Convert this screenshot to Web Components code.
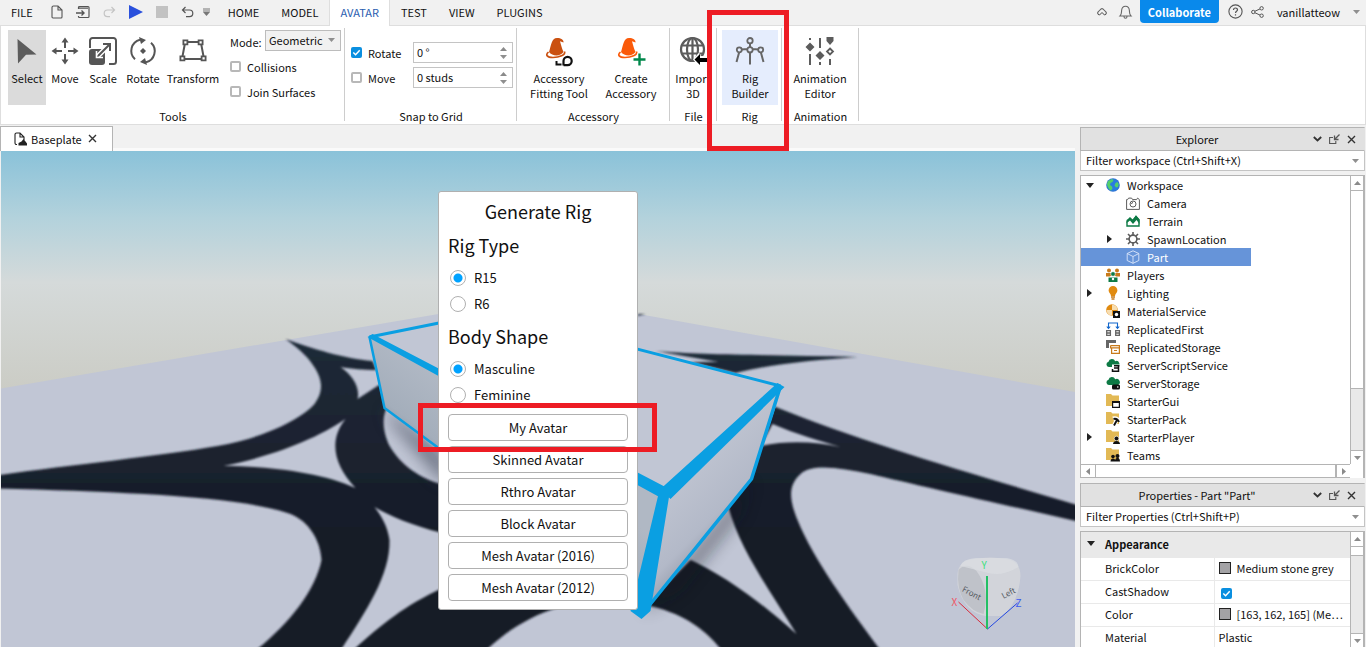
<!DOCTYPE html>
<html lang="en">
<head>
<meta charset="utf-8">
<meta name="viewport" content="width=device-width, initial-scale=1">
<title>Baseplate - Studio</title>
<style>
html, body { margin: 0; height: 100%; }
body { font: 11px/16px "Noto Sans CJK SC", "Noto Sans", sans-serif; color: #111; background: #f1f1f1; overflow: hidden; }
</style>
</head>
<body>
<studio-app></studio-app>
<script>
const ICONS = {
  file: [12,14,'<path d="M1 2.500a1.500 1.500 0 0 1 1.500-1.500H7l4 4v7a1 1 0 0 1-1 1H2a1 1 0 0 1-1-1zM7 1v4h4" fill="none" stroke="#555" stroke-width="1.100"/>'],
  open: [14,14,'<path d="M2.500 4V2.500a1 1 0 0 1 1-1h8.500a1 1 0 0 1 1 1v9a1 1 0 0 1-1 1H3.500a1 1 0 0 1-1-1V11M3 3.200h9" fill="none" stroke="#555" stroke-width="1.200"/><path d="M0 8h8M5.500 5.500 8 8l-2.500 2.500" fill="none" stroke="#555" stroke-width="1.400"/>'],
  redo: [13,12,'<path d="M11.500 4H4.500a3.300 3.300 0 0 0 0 6.600H7M8.500 1l3 3-3 3" fill="none" stroke="#c4c4c4" stroke-width="1.200"/>'],
  undo: [13,12,'<path d="M1.500 4h7a3.300 3.300 0 0 1 0 6.600H5M4.500 1l-3 3 3 3" fill="none" stroke="#555" stroke-width="1.200"/>'],
  play: [14,14,'<path d="M0 0 14 7 0 14z" fill="#2a50dc"/>'],
  stop: [12,12,'<path d="M0 0h12v12H0z" fill="#c2c2c2"/>'],
  more: [7,8,'<path d="M0 1h7M0 3h7" stroke="#777"/><path d="M0 4h7L3.500 8z" fill="#777"/>'],
  caret: [7,4,'<path d="M0 0h7L3.500 4z" fill="#8f8f8f"/>'],
  cloud: [10,8,'<path d="M5 .7a2.300 2.300 0 0 0-2.300 2 2.300 2.300 0 0 0-2 2.300A2 2 0 0 0 2.500 7L5 4.500 7.500 7a2 2 0 0 0 1.800-2 2.300 2.300 0 0 0-2-2.300A2.300 2.300 0 0 0 5 .7z" fill="none" stroke="#444"/>'],
  bell: [13,14,'<path d="M1 11h11c-1.600-1.500-1.500-3-1.600-5.500C10.200 3 8.800 1.300 6.500 1.300S2.800 3 2.600 5.500C2.500 8 2.600 9.500 1 11zM5 11.500c0 2.400 3 2.400 3 0" fill="none" stroke="#666" stroke-width="1.100"/>'],
  help: [15,15,'<circle cx="7.500" cy="7.500" r="6.600" fill="none" stroke="#555" stroke-width="1.100"/><path d="M5.500 6c0-2.700 4-2.600 4-.2 0 1.500-2 1.500-2 3.200M7.500 10.300v1.200" fill="none" stroke="#555" stroke-width="1.200"/>'],
  share: [13,12,'<path d="M2.300 6 10.300 2.300M2.300 6l8 3.700" stroke="#555"/><g fill="#f1f1f1" stroke="#555"><circle cx="2.300" cy="6" r="1.700"/><circle cx="10.600" cy="2.300" r="1.700"/><circle cx="10.600" cy="9.700" r="1.700"/></g>'],
  select: [28,28,'<path d="M4.500 2 23.500 17.500 13 17.800 5 26.500z" fill="#5c5c5c"/>'],
  move: [28,28,'<path d="M14 3v8M14 17v8M3 14h8M17 14h8" stroke="#555" stroke-width="2"/><path d="M10.500 5.500 14 .5l3.500 5zM10.500 22.500l3.500 5 3.500-5zM5.500 10.500l-5 3.500 5 3.500zM22.500 10.500l5 3.500-5 3.500z" fill="#555"/>'],
  scale: [28,28,'<path d="M1 11V3.500A2.500 2.500 0 0 1 3.500 1h21A2.500 2.500 0 0 1 27 3.500v21a2.500 2.500 0 0 1-2.500 2.500H20" fill="none" stroke="#555" stroke-width="2"/><path d="M0 15a3 3 0 0 1 3-3h10a3 3 0 0 1 3 3v10a3 3 0 0 1-3 3H3a3 3 0 0 1-3-3z" fill="#555"/><path d="M9 19 19 9" stroke="#fff" stroke-width="5"/><path d="M9 19 20 8M14 7H21V14" fill="none" stroke="#555" stroke-width="2"/><path d="M7.500 14v6.500H14" fill="none" stroke="#fff" stroke-width="1.600"/>'],
  rotate: [28,28,'<path d="M17 25.300A11.500 11.500 0 0 0 22 5.700M11 2.700A11.500 11.500 0 0 0 6 22.300" fill="none" stroke="#555" stroke-width="2"/><path d="M10 0l7 3-5 4zM18 28l-7-3 5-4z" fill="#555"/><path d="M14 11l3 3-3 3-3-3z" fill="#555"/>'],
  transform: [28,28,'<path d="M6.500 5h15M3.500 22h21M6 6 3 22M22 6l3 16" stroke="#555" stroke-width="2"/><g fill="#fff" stroke="#555" stroke-width="1.800"><path d="M4.400 3.400h4v4h-4zM19.600 3.400h4v4h-4zM1.400 19.400h4v4h-4zM22.600 19.400h4v4h-4z"/></g>'],
  fitting: [32,30,'<path d="M6 15C8 9 8.500 1 14 1c4 0 7 2 6.500 4.500L17 4.300C18 8 19 12 20.500 15 17 20 9 19 6 15z" fill="#ca5010"/><path d="M5.500 15C2 18 4 20.500 10 20.500S23 18 21.500 14.500" fill="none" stroke="#ca5010" stroke-width="1.600"/><path d="M13.500 24v3.500h5" fill="none" stroke="#111" stroke-width="2"/><path d="M20.500 28.500v-4.500a4.100 4.100 0 1 1 4.100 4.100h-4" fill="none" stroke="#111" stroke-width="2.200"/>'],
  create: [32,30,'<path d="M6 15C8 9 8.500 1 14 1c4 0 7 2 6.500 4.500L17 4.300C18 8 19 12 20.500 15 17 20 9 19 6 15z" fill="#fa5a0a"/><path d="M5.500 15C2 18 4 20.500 10 20.500S23 18 21.500 14.500" fill="none" stroke="#fa5a0a" stroke-width="1.600"/><path d="M24.500 16.500v12M18.500 22.500h12" stroke="#fff" stroke-width="5"/><path d="M24.500 16.500v12M18.500 22.500h12" stroke="#00884b" stroke-width="2.400"/>'],
  globe: [28,28,'<g fill="none" stroke="#5c5c5c" stroke-width="2.200"><circle cx="13.500" cy="12.500" r="11.500"/><ellipse cx="13.500" cy="12.500" rx="5.500" ry="11.500"/><path d="M13.500 1v23M3 8.500h21M3 16.500h21"/></g><path d="M14 22.500 20.500 15v4H28v7h-7.500v4z" fill="#fff"/><path d="M15.500 22.500 21 17v4h7v4h-7v3z" fill="#000"/>'],
  rig: [30,28,'<path d="M15 5v22.500M4 13C9 11.500 10 12.500 15 12.500S21 11.500 26 13M4.500 14 1.500 25M25.500 14l3 11" fill="none" stroke="#666" stroke-width="2"/><g fill="#e5edfd" stroke="#666" stroke-width="1.800"><circle cx="15" cy="3.700" r="2.700"/><circle cx="15" cy="12.800" r="2.700"/><circle cx="4.300" cy="12.800" r="2.500"/><circle cx="25.700" cy="12.800" r="2.500"/></g>'],
  anim: [28,28,'<path d="M4 1v2M4 17v11M14 1v10M14 25v3M24 22v6" stroke="#5c5c5c" stroke-width="2"/><path d="M4 5.500 8.500 10 4 14.500-.5 10zM14 14l4.500 4.500L14 23l-4.500-4.500zM20.500 0h7v4L24 8l-3.500-4z" fill="#5c5c5c"/><path d="M24 11.500l3 3-3 3-3-3z" fill="#fff" stroke="#5c5c5c" stroke-width="1.800"/>'],
  place: [13,14,'<path d="M3 12.500H2.500A1.500 1.500 0 0 1 1 11V2.500A1.500 1.500 0 0 1 2.500 1H6l4 4v3M6 1v4h4" fill="none" stroke="#222" stroke-width="1.100"/><path d="M4.500 13.500V11l3-1.500L9.500 7l2 2.500 1.500 2v2z" fill="#222"/>'],
  close: [9,9,'<path d="M1 1l7 7M8 1 1 8" stroke="#333" stroke-width="1.400"/>'],
  down: [9,6,'<path d="M.8 1 4.500 4.500 8.200 1" fill="none" stroke="#333" stroke-width="1.800"/>'],
  dock: [11,10,'<path d="M4 3.500H.6v6h6.200V7" fill="none" stroke="#555" stroke-width="1.100"/><path d="M10.500.500 6 5M5.500 1.500V5.500h4" fill="none" stroke="#555" stroke-width="1.300"/>'],
  world: [14,14,'<circle cx="7" cy="7" r="6.800" fill="#2f73d0"/><circle cx="7" cy="7" r="6" fill="#2a7be0"/><path d="M2 3 6 1l1.500 1-1 2-2 1-.500 2 2 1.500.500 2-1.500 2C3 12 1 8 1 6zM9.500 5l2-1 1.200 2-.7 3-2 .5-1.500-2z" fill="#53d06b"/>'],
  camera: [14,13,'<path d="M.6 2.600h1l1-1.500h3l1 1.500h4l1-1.500 1.800 1.500v9.800H.6z" fill="none" stroke="#5c5c5c"/><circle cx="7" cy="7" r="3" fill="none" stroke="#5c5c5c"/><path d="M7 5.500A1.500 1.500 0 0 0 5.500 7" fill="none" stroke="#5c5c5c"/>'],
  terrain: [14,12,'<path d="M1 11V7l3-4 3 3 3-4.500L13 5v6z" fill="none" stroke="#0d7a45" stroke-width="1.400"/><path d="M.5 8V5L4 2.500l2.500 2L10 .5l3.500 3.700V9l-3-4-3.500 4-3-3.500z" fill="#0d7a45"/>'],
  spawn: [14,14,'<circle cx="7" cy="7" r="3.900" fill="none" stroke="#5c5c5c" stroke-width="1.600"/><path d="M7 0v3M7 11v3M0 7h3M11 7h3M2 2l2.200 2.200M9.800 9.800 12 12M12 2 9.800 4.200M4.200 9.800 2 12" stroke="#5c5c5c" stroke-width="1.600"/>'],
  part: [14,14,'<path d="M7 .8 12.800 3.500v7L7 13.300 1.200 10.500v-7zM1.200 3.500 7 6.500l5.800-3M7 6.500v6.800" fill="none" stroke="#dbe7fb" stroke-width=".9"/>'],
  players: [14,14,'<g fill="#c87a1a"><circle cx="3" cy="2.500" r="2"/><circle cx="11" cy="2.500" r="2"/><path d="M0 8.500V5h14v3.500l-3.500 0L7 7 3.500 8.500z"/></g><circle cx="7" cy="6" r="2.300" fill="#0d7a45" stroke="#fff" stroke-width=".6"/><path d="M2.500 14v-4.500h9V14z" fill="#0d7a45"/><circle cx="7" cy="11" r="1.200" fill="#fff"/>'],
  bulb: [14,14,'<path d="M7 0a4.400 4.400 0 0 0-4.400 4.400C2.600 7 5 7.500 5 10h4c0-2.500 2.400-3 2.400-5.600A4.400 4.400 0 0 0 7 0z" fill="#e08a10"/><path d="M5 11h4M5.500 13h3" stroke="#c87a1a" stroke-width="1.300"/>'],
  material: [14,14,'<circle cx="6" cy="6" r="5.800" fill="#e08a10"/><path d="M6 6V.5A5.500 5.500 0 0 1 11.500 6zM6 6v5.500A5.500 5.500 0 0 1 .5 6z" fill="#f7ddb0"/><path d="M7 7h7v7H7z" fill="#111"/><circle cx="10.500" cy="10.500" r="1.700" fill="#fff"/>'],
  repfirst: [14,14,'<path d="M2.500 6V1h9v5M.8 4.500l1.700 2 1.700-2M9.800 4.500l1.700 2 1.700-2" fill="none" stroke="#1266cc" stroke-width="1.100"/><path d="M.7 8.700h3.700v4.700H.7zM9.700 8.700h3.700v4.700H9.700zM1 11h3M10 11h3" fill="none" stroke="#666" stroke-width="1.300"/>'],
  repstore: [14,14,'<path d="M0 0h10v3H3v5H0z" fill="#666"/><path d="M4.600 5.600h8.800v7.800H5.600V8M4.600 5.600v2.200h8.800" fill="#fff" stroke="#c87a1a" stroke-width="1.200"/><path d="M8 10.500h3" stroke="#c87a1a"/>'],
  serverscript: [14,14,'<path d="M2.800 9a2.700 2.700 0 0 1-.3-5.300 3.500 3.500 0 0 1 6.700-.5A3 3 0 0 1 11.500 9z" fill="#0d7a45"/><path d="M6 6.500h8v7H6z" fill="#fff"/><path d="M8 7.700h5.500M8 10h4M12.500 8v5.200H6.500V11" fill="none" stroke="#111" stroke-width="1.500"/>'],
  serverstore: [14,14,'<path d="M2.800 9a2.700 2.700 0 0 1-.3-5.300 3.500 3.500 0 0 1 6.700-.5A3 3 0 0 1 12 9z" fill="#0d7a45"/><rect x="6" y="8.500" width="8" height="5" rx="1.500" fill="#111"/><circle cx="11.800" cy="11" r=".8" fill="#fff"/>'],
  gui: [14,14,'<path d="M0 0h5l1.500 1.500H13V12H0z" fill="#e2b955"/><path d="M6.600 7.600h6.800v5.800H6.600z" fill="#fff" stroke="#111" stroke-width="1.200"/><path d="M6 8h8" stroke="#111" stroke-width="2"/>'],
  pack: [14,14,'<path d="M0 0h5l1.500 1.500H13V12H0z" fill="#e2b955"/><path d="M7 6.500c3-1 5 1 6 3M11 7.500 8 13.500" fill="none" stroke="#fff" stroke-width="4"/><path d="M7.500 7c3-.7 4.500.5 5.500 3M11 8l-3 5.500" fill="none" stroke="#111" stroke-width="1.900"/>'],
  splayer: [14,14,'<path d="M0 0h5l1.500 1.500H13V12H0z" fill="#e2b955"/><circle cx="10.500" cy="8.500" r="2.300" fill="#111" stroke="#fff" stroke-width=".6"/><path d="M7 14c0-4 7-4 7 0z" fill="#111"/>'],
  teams: [14,14,'<path d="M0 0h5l1.500 1.500H13V12H0z" fill="#e2b955"/><g fill="#111"><circle cx="11.500" cy="8" r="2"/><circle cx="7" cy="8.500" r="1.800"/><path d="M4.500 13.500c0-4 5-4 5 0zM9 13.500c0-5 5-5 5 0z"/></g>'],
  arrowRight: [5,8,'<path d="M0 0l5 4-5 4z" fill="#222"/>'],
  arrowDown: [8,5,'<path d="M0 0h8L4 5z" fill="#222"/>'],
  sbUp: [7,4,'<path d="M0 4h7L3.500 0z" fill="#8a8a8a"/>'],
  sbLeft: [4,7,'<path d="M4 0v7L0 3.500z" fill="#8a8a8a"/>'],
  sbRight: [4,7,'<path d="M0 0v7l4-3.500z" fill="#8a8a8a"/>'],
};

const BASE = `*,*::before,*::after{box-sizing:border-box}
button,input,select{font:inherit;color:inherit;margin:0}
button{border:0;background:none;padding:0}`;

/* Registers an element whose shadow root is rendered once from its attributes. */
function define(tag, css, html) {
  const base = document.createElement('template');
  base.innerHTML = `<style>${BASE}${css}</style>`;
  customElements.define(tag, class extends HTMLElement {
    constructor() {
      super();
      this.attachShadow({ mode: 'open' }).append(base.content.cloneNode(true));
    }
    connectedCallback() {
      if (this.ready) return;
      this.ready = true;
      const t = document.createElement('template');
      t.innerHTML = typeof html === 'function' ? html(this) : html;
      this.shadowRoot.append(t.content.cloneNode(true));
    }
  });
}

define('ui-icon', `:host{display:block;flex:none}svg{display:block;overflow:visible}`, el => {
  const [w, h, body] = ICONS[el.getAttribute('name')];
  return `<svg width="${w}" height="${h}" viewBox="0 0 ${w} ${h}" aria-hidden="true">${body}</svg>`;
});

define('ui-check', `:host{display:block}
label{display:flex;align-items:center;gap:6px;height:25px;white-space:nowrap}
input{appearance:none;width:11px;height:11px;border:2px solid #b8b8b8;border-radius:2px;background:#fff;display:block}
input:checked{border:0;background:#0a8fe0 url("data:image/svg+xml,%3Csvg xmlns='http://www.w3.org/2000/svg' viewBox='0 0 12 12'%3E%3Cpath d='M2.500 6l2.500 2.500 4.500-5' fill='none' stroke='white' stroke-width='1.600'/%3E%3C/svg%3E") center/100%}`,
  el => `<label><input type="checkbox" ${el.hasAttribute('checked') ? 'checked' : ''}><slot></slot></label>`);

define('mark-box', `:host{position:absolute;border:5px solid #ed1c24;pointer-events:none;z-index:5}`, '');

define('menu-bar', `:host{display:flex;align-items:stretch;height:26px;background:#f1f1f1;border-bottom:1px solid #dedede}
nav{display:flex;margin-bottom:-1px}
nav button{padding:0 11px 3px}
nav:first-child button{padding-left:13px}
nav .on{background:#fff;color:#2a5db0;border:1px solid #dedede;border-width:0 1px;padding:0 10px 3px}
.quick{display:flex;gap:13px;align-items:center;padding:0 7px 2px}
.quick button:last-child{margin-left:-4px}
.user{margin-left:auto;display:flex;align-items:center;padding-right:6px}
.user>*{margin-bottom:2px}
.collab{background:#0989eb;color:#fff;font-weight:700;height:23px;width:79px;border-radius:0 0 4px 4px;align-self:flex-start;margin:0 9px 0 8px}
.name{margin:0 13px;padding-bottom:1px}`,
`<nav><button>FILE</button></nav>
<div class="quick">${['file','open','redo','play','stop','undo','more'].map(i => `<button aria-label="${i}"><ui-icon name="${i}"></ui-icon></button>`).join('')}</div>
<nav><button>HOME</button><button>MODEL</button><button class="on">AVATAR</button><button>TEST</button><button>VIEW</button><button>PLUGINS</button></nav>
<div class="user"><ui-icon name="cloud"></ui-icon><ui-icon name="bell" style="margin-left:12px"></ui-icon>
<button class="collab">Collaborate</button><ui-icon name="help"></ui-icon><ui-icon name="share" style="margin-left:8px"></ui-icon><button class="name">vanillatteow</button><ui-icon name="caret"></ui-icon></div>`);

define('ribbon-group', `:host{display:flex;flex-direction:column;position:relative;flex:none;padding:4px 0 0;height:98px}
:host::after{content:"";position:absolute;right:0;top:2px;bottom:3px;width:1px;background:#cdcdcd}
.row{display:flex;height:75px}
.label{text-align:center;padding-top:3px}`,
  el => `<div class="row"><slot></slot></div><div class="label">${el.getAttribute('label')}</div>`);

define('tool-button', `:host{display:block;flex:none}
button{display:flex;flex-direction:column;align-items:center;width:100%;height:75px;white-space:pre-line;line-height:15px}
.i{height:28px;margin:7px 0 6px}
:host([active]) button{background:#dbdbdb}
:host([hot]) button{background:#e5edfd}`,
  el => `<button><ui-icon class="i" name="${el.getAttribute('icon')}"></ui-icon><span><slot></slot></span></button>`);

define('spin-box', `:host{display:flex;align-items:center;width:100px;height:21px;border:1px solid #c4c4c4;background:#fff;padding-right:5px}
input{flex:1;min-width:0;border:0;background:none;padding:0 3px 2px;outline:0}
div{display:grid;gap:4px}`,
  el => `<input value="${el.getAttribute('value')}" aria-label="${el.getAttribute('label')}"><div><ui-icon name="sbUp"></ui-icon><ui-icon name="caret"></ui-icon></div>`);

define('ribbon-bar', `:host{display:flex;height:99px;background:#fff;border:1px solid #dedede;border-top:0}
.opts{padding-left:8px;width:119px;margin-top:-1px}
.mode{display:flex;align-items:center;justify-content:space-between;height:25px}
.sel{position:relative;margin-top:-2px}
select{appearance:none;width:76px;height:21px;border:1px solid #bcbcbc;border-radius:0;background:#f1f1f1;padding:0 3px 2px;display:block}
.sel ui-icon{position:absolute;right:6px;top:8px}
.snap{display:grid;grid-template-columns:62px 100px;grid-auto-rows:25px;align-content:start;align-items:center;padding:10px 0 0 6px}
tool-button{text-align:center}
mark-box{left:-10px;right:-7px;top:-16px;bottom:-27px}`,
`<ribbon-group label="Tools" style="width:344px"><div style="display:flex;padding-left:7px">
<tool-button icon="select" active style="width:38px">Select</tool-button>
<tool-button icon="move" style="width:38px">Move</tool-button>
<tool-button icon="scale" style="width:38px">Scale</tool-button>
<tool-button icon="rotate" style="width:42px">Rotate</tool-button>
<tool-button icon="transform" style="width:58px">Transform</tool-button></div>
<div class="opts"><div class="mode"><label for="mode">Mode:</label><span class="sel"><select id="mode"><option>Geometric</option></select><ui-icon name="caret"></ui-icon></span></div>
<ui-check>Collisions</ui-check><ui-check>Join Surfaces</ui-check></div></ribbon-group>
<ribbon-group label="Snap to Grid" style="width:172px"><div class="snap">
<ui-check checked>Rotate</ui-check><spin-box value="0 °" label="Rotate"></spin-box>
<ui-check>Move</ui-check><spin-box value="0 studs" label="Move"></spin-box></div></ribbon-group>
<ribbon-group label="Accessory" style="width:153px"><div style="display:flex;padding-left:6px">
<tool-button icon="fitting" style="width:72px">Accessory
Fitting Tool</tool-button><tool-button icon="create" style="width:72px">Create
Accessory</tool-button></div></ribbon-group>
<ribbon-group label="File" style="width:47px"><tool-button icon="globe" style="width:46px">Import
3D</tool-button></ribbon-group>
<ribbon-group label="Rig" style="width:65px"><tool-button icon="rig" hot style="width:56px;margin-left:5px">Rig
Builder</tool-button><mark-box></mark-box></ribbon-group>
<ribbon-group label="Animation" style="width:77px"><tool-button icon="anim" style="width:76px">Animation
Editor</tool-button></ribbon-group>`);

define('doc-tabs', `:host{display:flex;height:26px;padding-top:1px;background:#f1f1f1;border-bottom:3px solid #fafafa}
div{display:flex;align-items:center;gap:4px;width:113px;height:25px;background:#fff;border:1px solid #b4b4b4;border-bottom:0;padding:0 0 1px 13px}
button{margin-left:2px}`,
`<div><ui-icon name="place"></ui-icon><span>Baseplate</span><button aria-label="Close"><ui-icon name="close"></ui-icon></button></div>`);

define('scene-view', `:host{display:block;position:absolute;inset:0}svg{display:block;width:100%;height:100%}`,
`<svg viewBox="0 151 1075 496" preserveAspectRatio="xMidYMid slice">
<defs>
<linearGradient id="sky" x1="0" y1="151" x2="0" y2="390" gradientUnits="userSpaceOnUse"><stop offset="0" stop-color="#8ac2d9"/><stop offset=".28" stop-color="#b3d2dc"/><stop offset=".55" stop-color="#d5dada"/><stop offset="1" stop-color="#cbccc5"/></linearGradient>
<linearGradient id="ink" x1="0" y1="330" x2="0" y2="560" gradientUnits="userSpaceOnUse"><stop offset="0" stop-color="#202b39"/><stop offset="1" stop-color="#161a26"/></linearGradient>
<linearGradient id="lf" x1="430" y1="370" x2="385" y2="430" gradientUnits="userSpaceOnUse"><stop offset="0" stop-color="#b0b8c4"/><stop offset=".7" stop-color="#a4aebb"/><stop offset="1" stop-color="#8b95a3"/></linearGradient>
<linearGradient id="rf" x1="690" y1="470" x2="740" y2="520" gradientUnits="userSpaceOnUse"><stop offset="0" stop-color="#bec3d0"/><stop offset=".7" stop-color="#b3b9c8"/><stop offset="1" stop-color="#9aa1b1"/></linearGradient>
<filter id="soft" x="-5%" y="-5%" width="110%" height="110%"><feGaussianBlur stdDeviation=".8"/></filter>
<filter id="shade" x="-30%" y="-30%" width="160%" height="160%"><feGaussianBlur stdDeviation="8"/></filter>
</defs>
<rect y="151" width="1075" height="260" fill="url(#sky)"/>
<path d="M0 388.500 438 314 538 297 638 314 1075 392V647H0z" fill="#c1c6d5"/>
<g fill="url(#ink)" filter="url(#soft)">
<path d="M-5 475.500C70 465 160 456 217 446 260 439 300 420 314 404 326 388 320 374 308 359 300 350 292 344 285 339 310 348 345 359 372 361L376 370C362 370 352 369 340 367 352 375 360 388 357 399L380 384 386 408C381 420 383 432 388 444 400 466 420 478 440 484H500V610L354 649H257C290 622 315 590 321 560 320 540 308 521 290 514 240 496 120 492-5 488.500z"/>
<path d="M655 351C700 355 780 355 857 357 815 360 770 364 735 373L690 362 718 362z"/>
<path d="M637 316l8-2-7 0z"/>
<path d="M770 405C870 445 960 470 1080 506V522C1000 504 920 486 870 474 840 468 812 463 800 474 788 485 788 498 797 520 812 558 850 610 879 649H720C704 628 680 612 645 605L690 560 745 420z"/>
<path d="M438 589C408 603 380 625 354 649H487C505 632 530 615 560 607L500 580z"/>
</g>
<g fill="#c1c6d5" filter="url(#soft)">
<path d="M223 466C265 458 315 440 345 419 328 440 333 465 355 488 320 472 265 466 223 466z"/>
<path d="M374 507C388 515 412 526 442 533V588C405 605 380 625 354 649H341C365 612 390 575 389 540 387 526 381 516 374 507z"/>
<path d="M772 424C795 434 820 441 840 447 815 442 790 440 760 446z"/>
<path d="M726 500C738 550 770 590 796 634 770 610 725 575 686 558z"/>
</g>
<path d="M384 408 440 450 455 480 440 480 392 425z" fill="#3b4252" opacity=".6" filter="url(#shade)"/>
<path d="M751 479 641 615 680 590 740 515z" fill="#10141f" opacity=".4" filter="url(#shade)"/>
<path d="M369 337 493 312 782 386 663 493z" fill="#c1c6d4"/>
<path d="M369 337 663 493 641 615 384 408z" fill="url(#lf)"/>
<path d="M663 493 782 386 751 479 641 615z" fill="url(#rf)"/>
<g fill="none" stroke="#0a9fe2" stroke-linejoin="round">
<path d="M369 337 493 312 780 386" stroke-width="3"/><path d="M780 386 751 479 641 615" stroke-width="3.500"/>
<path d="M369 337 384 408 438 448 641 615" stroke-width="2.500"/></g>
<g fill="#0a9fe2"><path d="M367 337 372 334 663 486 669 490 665 499 657 496zM777 383 784 387 670 499 660 489zM658 494 669 494 650 611 641 619 630 611z"/></g>
<g>
<path d="M957 574Q958 560 974 559 990 556 1005 559 1020 561 1020 576 1018 604 1001 616H985Q963 612 957 585z" fill="#d3d5da" opacity=".95"/>
<path d="M958 570Q956 588 963 600 972 612 983 614 990 590 976 571 966 561 958 570z" fill="#bfc2c9"/>
<path d="M960 566Q962 559 975 558H1006Q1018 560 1018 567 1000 578 984 572z" fill="#dcdee2" opacity=".7"/>
<path d="M987 629 958 602" stroke="#d92b3c"/><path d="M987 629 1017 603" stroke="#2448e0"/><path d="M986.500 629V576" stroke="#23c065" stroke-width="2"/>
<g font-family="Noto Sans CJK SC, sans-serif" font-size="10"><text x="951" y="606" fill="#ee5566">X</text><text x="1015" y="607" fill="#3a5af0">Z</text><text x="981" y="569" fill="#3be07c">Y</text>
<g font-size="8" fill="#555a62"><text transform="translate(961 591) rotate(28)">Front</text><text transform="translate(1003 599) rotate(-28)">Left</text></g></g>
</g>
</svg>`);

define('rig-dialog', `:host{display:block;position:relative;width:200px;height:419px;flex:none;margin-top:40px;background:#fff;border:1px solid #b0b0b0;border-radius:3px;padding:6px 9px 0;color:#111}
h1,legend{font-size:18px;font-weight:400;margin:0;padding:0;line-height:26px}
h1{text-align:center;margin-bottom:8px}
fieldset{border:0;margin:0 0 6px;padding:0}
legend{margin-bottom:7px}
label{display:flex;align-items:center;gap:8px;height:26px;padding-left:2px;font-size:13px}
input{appearance:none;width:16px;height:16px;border:1px solid #b0b0b0;border-radius:50%;background:#fff}
input:checked{background:radial-gradient(circle,#00a2ff 0 4px,#fff 5px)}
.b{position:relative;display:block;margin-bottom:5px}
.b button{display:block;width:100%;height:27px;border:1px solid #b0b0b0;border-radius:4px;background:#fff;font-size:13px;line-height:24px}
mark-box{left:-30px;right:-29px;top:-11px;bottom:-11px}`,
`<h1>Generate Rig</h1>
<fieldset><legend>Rig Type</legend><label><input type="radio" name="t" checked>R15</label><label><input type="radio" name="t">R6</label></fieldset>
<fieldset><legend>Body Shape</legend><label><input type="radio" name="s" checked>Masculine</label><label><input type="radio" name="s">Feminine</label></fieldset>
<div class="b"><button>My Avatar</button><mark-box></mark-box></div>
${['Skinned Avatar','Rthro Avatar','Block Avatar','Mesh Avatar (2016)','Mesh Avatar (2012)'].map(t => `<div class="b"><button>${t}</button></div>`).join('')}`);

define('view-port', `:host{display:flex;justify-content:center;align-items:flex-start;position:relative;overflow:hidden;flex:1;min-height:0;margin-left:1px}`,
`<scene-view></scene-view><rig-dialog></rig-dialog>`);

define('dock-panel', `:host{display:flex;flex-direction:column;min-height:0}
header{display:flex;align-items:center;height:24px;background:#e1e1e1;border:1px solid #b4b4b4;border-right-color:#e1e1e1;padding-right:8px}
h2{flex:1;text-align:center;margin:0;font-size:11px;font-weight:400;padding-bottom:1px}
.a{display:flex;gap:7px;align-items:center}
.f{position:relative;height:20px;background:#fff;border:1px solid #c4c4c4;border-top:0;margin-bottom:4px;display:flex;align-items:center;padding-right:5px}
input{flex:1;min-width:0;border:0;background:none;outline:0;padding:0 5px 1px}
input::placeholder{color:#111;opacity:1}
.body{display:flex;flex-direction:column;min-height:0;flex:1;border:1px solid #b4b4b4;border-right-width:2px;border-bottom:0;background:#fff}`,
  el => `<header><h2>${el.getAttribute('heading')}</h2><div class="a"><button aria-label="Menu"><ui-icon name="down"></ui-icon></button><button aria-label="Float"><ui-icon name="dock"></ui-icon></button><button aria-label="Close"><ui-icon name="close"></ui-icon></button></div></header>
<div class="f"><input placeholder="${el.getAttribute('filter')}" aria-label="Filter"><ui-icon name="caret"></ui-icon></div><div class="body"><slot></slot></div>`);

define('scroll-bar', `:host{display:flex;flex-direction:column;width:13px;border-left:1px solid #b4b4b4;background:#e9e9e9;flex:none}
:host([horizontal]){flex-direction:row;width:auto;height:14px;border-left:0;border-top:1px solid #b4b4b4;border-bottom:1px solid #b4b4b4}
span{display:grid;place-items:center;background:#fff;width:12px;height:14px;flex:none}
:host([horizontal]) span{width:14px;height:12px}
i{background:#fff;border:solid #b4b4b4;border-width:1px 0;flex:var(--thumb,1)}
:host([horizontal]) i{border-width:0 1px}
b{flex:var(--rest,0)}
.e{border-top:1px solid #b4b4b4}
:host([horizontal]) .e{border-top:0;border-left:1px solid #b4b4b4}`,
  el => { const h = el.hasAttribute('horizontal'); return `<span><ui-icon name="${h ? 'sbLeft' : 'sbUp'}"></ui-icon></span><i></i><b></b><span class="e"><ui-icon name="${h ? 'sbRight' : 'caret'}"></ui-icon></span>`; });

define('tree-row', `:host{display:flex;align-items:center;height:18px;width:170px;padding-left:3px;white-space:nowrap}
:host([level="1"]){padding-left:23px}
:host([selected]){background:#6694d9;color:#fff}
.t{width:11px;margin-right:10px;display:grid;place-items:center}
.i{width:15px;display:grid;place-items:center;margin-right:7px}
span:last-child{padding-bottom:1px}`,
  el => `<span class="t">${el.hasAttribute('arrow') ? `<ui-icon name="${el.getAttribute('arrow')}"></ui-icon>` : ''}</span><span class="i"><ui-icon name="${el.getAttribute('icon')}"></ui-icon></span><span><slot></slot></span>`);

const TREE = [['world','Workspace','arrow="arrowDown"'],['camera','Camera','level="1"'],['terrain','Terrain','level="1"'],['spawn','SpawnLocation','level="1" arrow="arrowRight"'],['part','Part','level="1" selected'],['players','Players',''],['bulb','Lighting','arrow="arrowRight"'],['material','MaterialService',''],['repfirst','ReplicatedFirst',''],['repstore','ReplicatedStorage',''],['serverscript','ServerScriptService',''],['serverstore','ServerStorage',''],['gui','StarterGui',''],['pack','StarterPack',''],['splayer','StarterPlayer','arrow="arrowRight"'],['teams','Teams','']];

define('explorer-tree', `:host{display:block}
.m{display:flex}.rows{flex:1;min-width:0}
.v{--thumb:198;--rest:61}
.h{margin-right:13px}`,
`<div class="m"><div class="rows">${TREE.map(([i,t,a]) => `<tree-row icon="${i}" ${a}>${t}</tree-row>`).join('')}</div><scroll-bar class="v"></scroll-bar></div><scroll-bar class="h" horizontal></scroll-bar>`);

define('property-grid', `:host{display:flex;min-height:0;flex:1;overflow:hidden}
.w{flex:1;min-width:0;overflow:hidden}
table{width:100%;border-collapse:collapse;table-layout:fixed}
th,td{height:23px;padding:0 0 1px;text-align:left;font-weight:400;border-bottom:1px solid #e9e9e9;white-space:nowrap;overflow:hidden}
col:first-child{width:133px}
thead th{height:25px;background:#e9e9e9;font-weight:700}
thead div{display:flex;align-items:center;gap:10px;padding-left:6px}
tbody th{padding-left:24px;border-right:1px solid #e9e9e9}
td{padding-left:4px}
td div{display:flex;align-items:center;gap:6px}
i{width:12px;height:12px;border:1px solid #222;background:#a3a2a5;flex:none}
ui-check{height:20px;margin-left:2px}
.v{--thumb:8;--rest:80}`,
`<div class="w"><table><colgroup><col><col></colgroup><thead><tr><th colspan="2"><div><ui-icon name="arrowDown"></ui-icon>Appearance</div></th></tr></thead>
<tbody><tr><th>BrickColor</th><td><div><i></i>Medium stone grey</div></td></tr>
<tr><th>CastShadow</th><td><div><ui-check checked></ui-check></div></td></tr>
<tr><th>Color</th><td><div><i></i>[163, 162, 165] (Me…</div></td></tr>
<tr><th>Material</th><td>Plastic</td></tr></tbody></table></div><scroll-bar class="v"></scroll-bar>`);

define('studio-app', `:host{display:flex;flex-direction:column;height:100vh;overflow:hidden}
main{display:flex;flex:1;min-height:0}
.left{flex:1;min-width:0;display:flex;flex-direction:column}
aside{width:285px;margin:2px 1px 0 5px;display:flex;flex-direction:column;gap:5px;min-height:0}
.ex{flex:none}.pr{flex:1}`,
`<menu-bar></menu-bar><ribbon-bar></ribbon-bar>
<main><div class="left"><doc-tabs></doc-tabs><view-port></view-port></div>
<aside><dock-panel class="ex" heading="Explorer" filter="Filter workspace (Ctrl+Shift+X)"><explorer-tree></explorer-tree></dock-panel>
<dock-panel class="pr" heading="Properties - Part &quot;Part&quot;" filter="Filter Properties (Ctrl+Shift+P)"><property-grid></property-grid></dock-panel></aside></main>`);
</script>
</body>
</html>
